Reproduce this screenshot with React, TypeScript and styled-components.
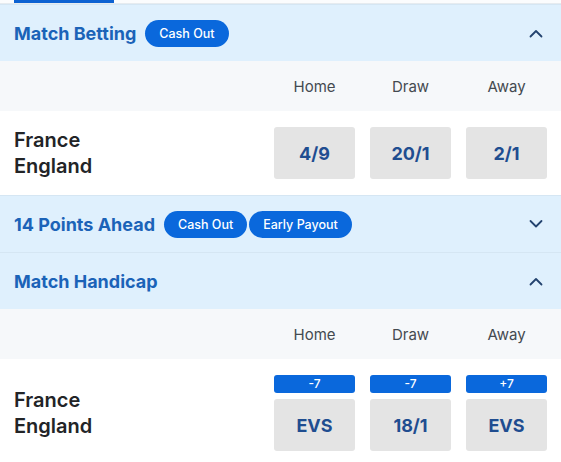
import styled, { createGlobalStyle } from "styled-components";

const GlobalStyle = createGlobalStyle`
  * { box-sizing: border-box; }
  body {
    margin: 0;
    background: #ffffff;
    font-family: Inter, "Noto Sans", "Liberation Sans", sans-serif;
  }
`;

type Market = {
  title: string;
  badges: string[];
  open: boolean;
  odds?: string[];
  lines?: string[];
};

const markets: Market[] = [
  { title: "Match Betting", badges: ["Cash Out"], open: true, odds: ["4/9", "20/1", "2/1"] },
  { title: "14 Points Ahead", badges: ["Cash Out", "Early Payout"], open: false },
  {
    title: "Match Handicap",
    badges: [],
    open: true,
    odds: ["EVS", "18/1", "EVS"],
    lines: ["-7", "-7", "+7"],
  },
];

function Chevron({ up }: { up: boolean }) {
  return (
    <ChevronBox viewBox="0 0 16 10" width="16" height="10">
      <path
        d={up ? "M2.5 8.5 L8 3 L13.5 8.5" : "M2.5 2 L8 7.5 L13.5 2"}
        fill="none"
        stroke="#23436f"
        strokeWidth="1.8"
        strokeLinecap="round"
        strokeLinejoin="round"
      />
    </ChevronBox>
  );
}

export default function App() {
  return (
    <>
      <GlobalStyle />
      <Page>
        <TabStrip>
          <TabIndicator />
        </TabStrip>
        {markets.map((m) => (
          <section key={m.title}>
            <Header>
              <Title>{m.title}</Title>
              <Badges>
                {m.badges.map((b) => (
                  <Pill key={b}>{b}</Pill>
                ))}
              </Badges>
              <Chevron up={m.open} />
            </Header>
            {m.open && m.odds && (
              <>
                <ColumnRow>
                  <Spacer />
                  <Cols>
                    {["Home", "Draw", "Away"].map((c) => (
                      <ColLabel key={c}>{c}</ColLabel>
                    ))}
                  </Cols>
                </ColumnRow>
                <EventRow $tall={!!m.lines}>
                  <Teams>
                    <span>France</span>
                    <span>England</span>
                  </Teams>
                  <Cols>
                    {m.odds.map((o, i) => (
                      <OddsCell key={i}>
                        {m.lines && <Line>{m.lines[i]}</Line>}
                        <Price>{o}</Price>
                      </OddsCell>
                    ))}
                  </Cols>
                </EventRow>
              </>
            )}
          </section>
        ))}
      </Page>
    </>
  );
}

const Page = styled.div`
  width: 561px;
  background: #ffffff;
`;

const TabStrip = styled.div`
  height: 4px;
  background: #fbfcfd;
  border-bottom: 1px solid #e6ebef;
  padding-left: 14px;
`;

const TabIndicator = styled.div`
  width: 100px;
  height: 3px;
  background: #0d62d2;
`;

const Header = styled.div`
  display: flex;
  align-items: center;
  height: 57px;
  padding: 0 14px;
  background: #dff0fd;
  border-top: 1px solid #d5e6f3;
`;

const Title = styled.div`
  font-size: 18px;
  font-weight: 700;
  color: #1b63b8;
`;

const Badges = styled.div`
  display: flex;
  gap: 2px;
  margin-left: 9px;
  flex: 1;
`;

const Pill = styled.span`
  display: inline-flex;
  align-items: center;
  height: 27px;
  padding: 0 14px;
  border-radius: 14px;
  background: #0a68dc;
  color: #ffffff;
  font-size: 12.5px;
  font-weight: 500;
`;

const ChevronBox = styled.svg`
  margin-right: 3px;
`;

const ColumnRow = styled.div`
  display: flex;
  align-items: center;
  height: 50px;
  padding: 0 14px;
  background: #f6f8fa;
`;

const Spacer = styled.div`
  flex: 1;
`;

const Cols = styled.div`
  display: grid;
  grid-template-columns: repeat(3, 81px);
  column-gap: 15px;
`;

const ColLabel = styled.div`
  text-align: center;
  font-size: 15px;
  color: #444a50;
`;

const EventRow = styled.div<{ $tall: boolean }>`
  display: flex;
  align-items: center;
  justify-content: space-between;
  padding: ${(p) => (p.$tall ? "16px 14px 12px" : "16px 14px")};
  background: #ffffff;
`;

const Teams = styled.div`
  display: flex;
  flex-direction: column;
  font-size: 20px;
  font-weight: 600;
  line-height: 26px;
  color: #222427;
`;

const OddsCell = styled.div`
  display: flex;
  flex-direction: column;
  gap: 6px;
`;

const Line = styled.div`
  height: 18px;
  border-radius: 3px;
  background: #0a68dc;
  color: #ffffff;
  font-size: 12px;
  font-weight: 500;
  line-height: 18px;
  text-align: center;
`;

const Price = styled.div`
  height: 52px;
  border-radius: 3px;
  background: #e4e4e4;
  display: flex;
  align-items: center;
  justify-content: center;
  font-size: 18px;
  font-weight: 700;
  color: #1f4d90;
`;
